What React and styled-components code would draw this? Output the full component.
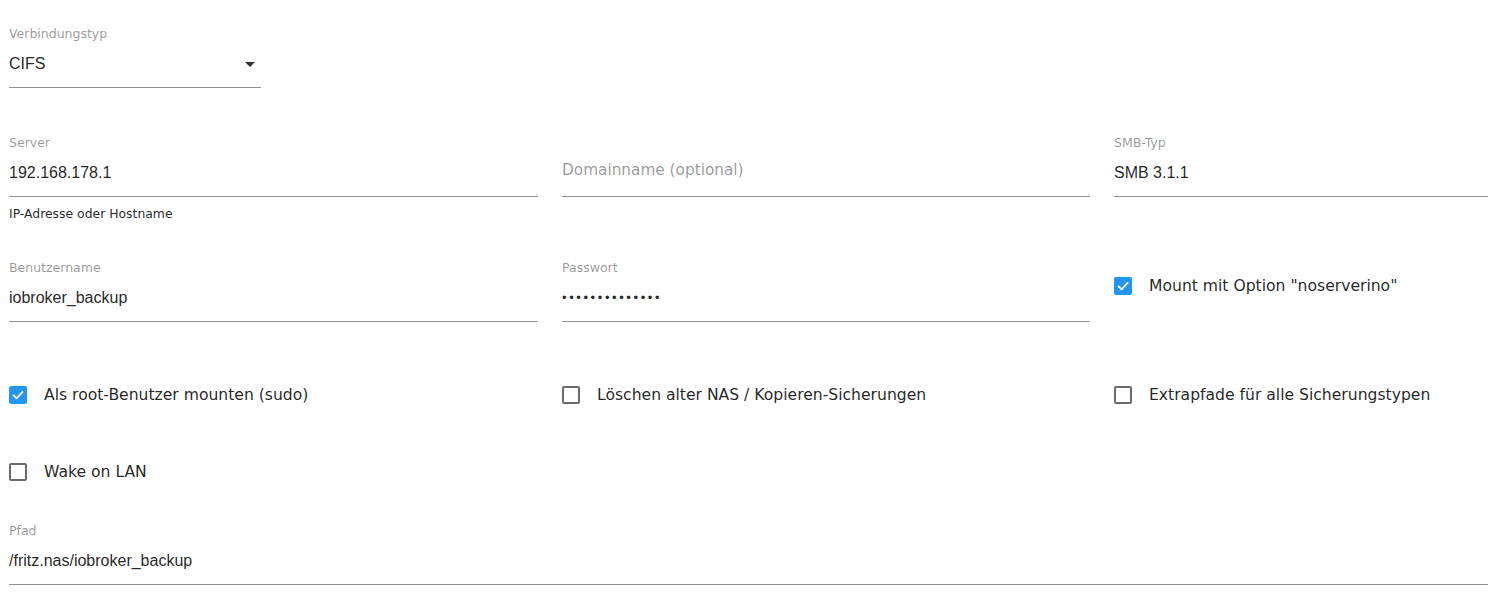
import React from "react";
import styled, { createGlobalStyle } from "styled-components";

const GlobalStyle = createGlobalStyle`
  html, body {
    margin: 0;
    padding: 0;
    background: #fff;
    overflow: hidden;
  }
  body {
    font-family: "Liberation Sans", Arial, sans-serif;
  }
`;

const labelFont = `"DejaVu Sans", "Noto Sans", sans-serif`;

const Page = styled.div`
  padding: 26px 0 0 9px;
  width: 1479px;
  display: flex;
  flex-direction: column;
`;

const Row = styled.div`
  display: grid;
  grid-template-columns: 529px 528px 1fr;
  column-gap: 24px;
  align-items: start;
  margin-top: ${(p) => p.$top || 0}px;
`;

const Field = styled.div`
  display: flex;
  flex-direction: column;
  width: ${(p) => (p.$width ? `${p.$width}px` : "auto")};
  margin-top: ${(p) => p.$top || 0}px;
`;

const Label = styled.label`
  font-family: ${labelFont};
  font-size: 12.5px;
  line-height: 16px;
  height: 16px;
  color: rgba(0, 0, 0, 0.42);
`;

const InputBox = styled.div`
  position: relative;
  display: flex;
  align-items: center;
  padding: 12px 0 13px;
  border-bottom: 1px solid #949494;
`;

const Value = styled.span`
  font-size: 16px;
  line-height: 20px;
  height: 20px;
  color: rgba(0, 0, 0, 0.87);
  white-space: nowrap;
`;

const Placeholder = styled(Value)`
  font-family: ${labelFont};
  font-size: 15.3px;
  line-height: 16px;
  color: rgba(0, 0, 0, 0.42);
  transform: translateY(-1px);
`;

const Dots = styled(Value)`
  font-size: 13px;
  letter-spacing: 2.6px;
`;

const ArrowIcon = styled.svg`
  position: absolute;
  right: -1px;
  top: 50%;
  margin-top: -13px;
  width: 24px;
  height: 24px;
  fill: rgba(0, 0, 0, 0.8);
`;

const Helper = styled.p`
  margin: 9px 0 0;
  font-family: ${labelFont};
  font-size: 12.4px;
  line-height: 16px;
  color: rgba(0, 0, 0, 0.87);
`;

const CheckItem = styled.label`
  display: flex;
  align-items: center;
  height: 42px;
  margin-top: ${(p) => p.$top || 0}px;
`;

const Box = styled.span`
  box-sizing: border-box;
  width: 18px;
  height: 18px;
  border-radius: 2px;
  flex-shrink: 0;
  display: flex;
  align-items: center;
  justify-content: center;
  border: ${(p) => (p.$checked ? "none" : "2px solid #6b6b6b")};
  background: ${(p) => (p.$checked ? "#2196f3" : "#fff")};
`;

const CheckText = styled.span`
  margin-left: 17px;
  font-family: ${labelFont};
  font-size: 15.6px;
  color: rgba(0, 0, 0, 0.87);
  white-space: nowrap;
`;

const TextField = ({ label, value, helper, placeholder, password, width, top }) => (
  <Field $width={width} $top={top}>
    <Label>{label}</Label>
    <InputBox>
      {placeholder ? (
        <Placeholder>{placeholder}</Placeholder>
      ) : password ? (
        <Dots>{"\u2022".repeat(value.length)}</Dots>
      ) : (
        <Value>{value}</Value>
      )}
    </InputBox>
    {helper && <Helper>{helper}</Helper>}
  </Field>
);

const SelectField = ({ label, value, width }) => (
  <Field $width={width}>
    <Label>{label}</Label>
    <InputBox>
      <Value>{value}</Value>
      <ArrowIcon viewBox="0 0 24 24">
        <path d="M7 10l5 5 5-5z" />
      </ArrowIcon>
    </InputBox>
  </Field>
);

const Checkbox = ({ checked, label, top }) => (
  <CheckItem $top={top}>
    <Box $checked={checked}>
      {checked && (
        <svg width="14" height="14" viewBox="0 0 14 14">
          <path
            d="M2.6 7.3l3 3 6-6.4"
            fill="none"
            stroke="#fff"
            strokeWidth="1.9"
            strokeLinecap="round"
            strokeLinejoin="round"
          />
        </svg>
      )}
    </Box>
    <CheckText>{label}</CheckText>
  </CheckItem>
);

const App = () => {
  return (
    <>
      <GlobalStyle />
      <Page>
        <SelectField label="Verbindungstyp" value="CIFS" width={252} />

        <Row $top={47}>
          <TextField label="Server" value="192.168.178.1" helper="IP-Adresse oder Hostname" />
          <TextField label="" placeholder="Domainname (optional)" />
          <TextField label="SMB-Typ" value="SMB 3.1.1" />
        </Row>

        <Row $top={38}>
          <TextField label="Benutzername" value="iobroker_backup" />
          <TextField label="Passwort" value="iobroker123456" password />
          <Checkbox checked top={5} label={'Mount mit Option "noserverino"'} />
        </Row>

        <Row $top={52}>
          <Checkbox checked label="Als root-Benutzer mounten (sudo)" />
          <Checkbox label="Löschen alter NAS / Kopieren-Sicherungen" />
          <Checkbox label="Extrapfade für alle Sicherungstypen" />
        </Row>

        <Row $top={35}>
          <Checkbox label="Wake on LAN" />
        </Row>

        <TextField top={30} label="Pfad" value="/fritz.nas/iobroker_backup" />
      </Page>
    </>
  );
};

export default App;
